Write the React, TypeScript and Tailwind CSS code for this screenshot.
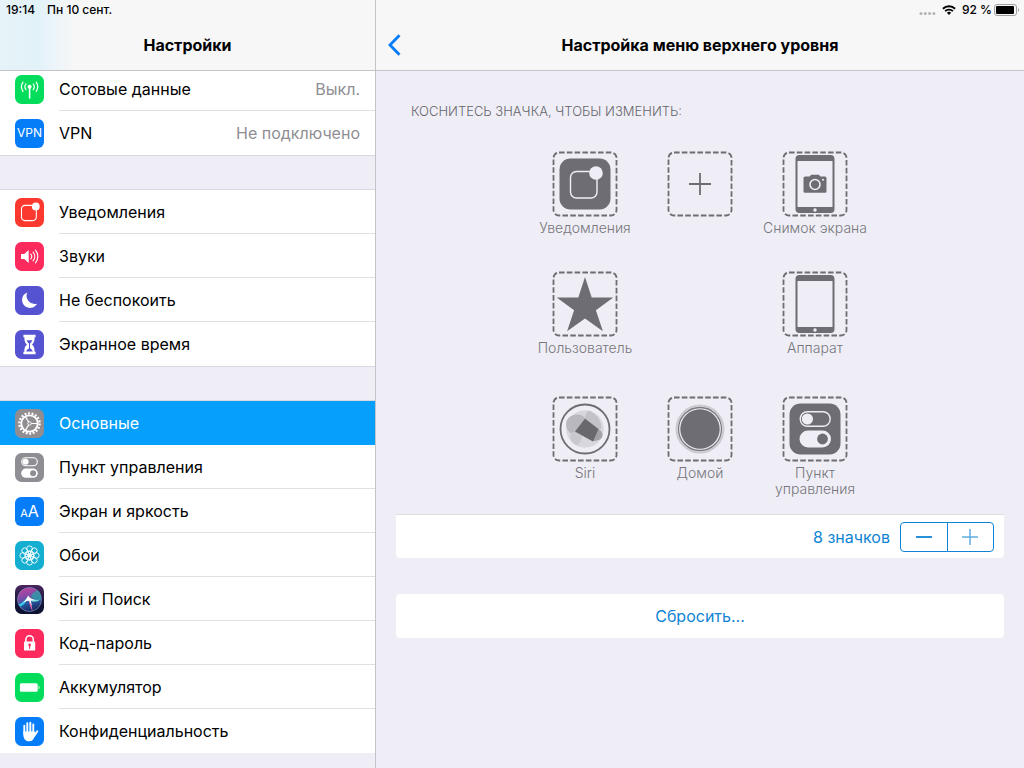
import React from 'react';

interface SettingsItem {
  label: string;
  value?: string;
  active?: boolean;
  icon: React.ReactNode;
}

interface MenuSlot {
  label: string;
  icon: React.ReactNode;
}

/**
 * Rounded square that holds a settings glyph
 */
const Tile = ({ color, children }: { color: string; children: React.ReactNode }) => (
  <svg className="size-[29px] shrink-0" viewBox="0 0 29 29" fill="none" aria-hidden="true">
    <rect width="29" height="29" rx="6.5" fill={color} />
    {children}
  </svg>
);

const TogglesGlyph = ({ back }: { back: string }) => (
  <>
    <rect x="6.7" y="4.8" width="15.6" height="8" rx="4" stroke="#fff" strokeWidth="1.1" />
    <circle cx="10.6" cy="8.8" r="3" fill="#fff" />
    <rect x="6.2" y="15.6" width="16.6" height="9.2" rx="4.6" fill="#fff" />
    <circle cx="18.1" cy="20.2" r="3" fill={back} />
  </>
);

const CellularIcon = () => (
  <Tile color="#04dd5c">
    <g stroke="#fff" strokeWidth="1.2" strokeLinecap="round">
      <path d="M14.6 12v11" strokeWidth="1.5" />
      <path d="M11 8.900a4.700 4.700 0 0 0 0 5.800M18.200 8.900a4.700 4.700 0 0 1 0 5.800" />
      <path d="M8 7.200a8.200 8.200 0 0 0 0 9.200M21.200 7.200a8.200 8.200 0 0 1 0 9.200" />
    </g>
    <circle cx="14.6" cy="11.800" r="2" fill="#fff" />
  </Tile>
);

const VpnIcon = () => (
  <span className="flex size-[29px] shrink-0 items-center justify-center rounded-md bg-[#067df8] text-xs text-white" aria-hidden="true">
    VPN
  </span>
);

const NotificationsIcon = () => (
  <Tile color="#fb392f">
    <path d="M17 7.400H9.800a3.300 3.300 0 0 0-3.300 3.300v8.600a3.300 3.300 0 0 0 3.300 3.300H18a3.300 3.300 0 0 0 3.300-3.300V12" stroke="#fff" strokeWidth="1.100" />
    <circle cx="20.800" cy="8.400" r="3.900" fill="#fff" />
  </Tile>
);

const SoundsIcon = () => (
  <Tile color="#fc2a5d">
    <path d="M6 11.9h3.300l4.400-3.900v13l-4.400-3.900H6z" fill="#fff" />
    <g stroke="#fff" strokeWidth="1.2" strokeLinecap="round">
      <path d="M15.800 12.200a3.600 3.600 0 0 1 0 4.600" />
      <path d="M18.100 10.200a6.600 6.600 0 0 1 0 8.600" />
      <path d="M20.500 8.200a9.800 9.800 0 0 1 0 12.600" />
    </g>
  </Tile>
);

const MoonIcon = () => (
  <Tile color="#5553d2">
    <path d="M12.300 6.400a8 8 0 1 0 9.800 11.300 8.300 8.300 0 0 1-9.800-11.300z" fill="#fff" />
  </Tile>
);

const HourglassIcon = () => (
  <Tile color="#5553d2">
    <path d="M8.400 4.800h12.200v2.400h-1c0 4.200-.8 5.600-2.600 7.300 1.800 1.700 2.600 3.100 2.600 7.300h1v2.400H8.400v-2.400h1c0-4.200.8-5.600 2.600-7.300-1.800-1.700-2.600-3.100-2.600-7.300h-1z" fill="#fff" />
    <path d="M11.700 10.300h5.600c-.4 1.600-1.500 2.600-2.300 3.200v5.100c1.200.3 2.200 1.200 2.800 3h-6.600c.6-1.800 1.600-2.700 2.800-3v-5.100c-.800-.6-1.900-1.600-2.300-3.200z" fill="#5553d2" />
  </Tile>
);

const GearIcon = () => (
  <Tile color="#918d90">
    <circle cx="14.500" cy="14.500" r="10.100" stroke="#fff" strokeWidth="2.400" strokeDasharray="1.900 1.625" />
    <circle cx="14.500" cy="14.500" r="8.200" stroke="#fff" strokeWidth="1.800" />
    <circle cx="14.500" cy="14.500" r="1.700" stroke="#fff" strokeWidth="1" />
    <path d="M16.200 14.500h6M13.600 13l-3.200-5.400M13.600 16l-3.200 5.400" stroke="#fff" strokeWidth="1.200" />
  </Tile>
);

const ControlCenterIcon = () => (
  <Tile color="#8f8e94">
    <TogglesGlyph back="#8f8e94" />
  </Tile>
);

const DisplayIcon = () => (
  <span className="flex size-[29px] shrink-0 items-baseline justify-center rounded-md bg-[#067df8] leading-7 text-white" aria-hidden="true">
    <span className="text-[11px]">A</span>
    <span className="text-base leading-7">A</span>
  </span>
);

const petals = [0, 45, 90, 135, 180, 225, 270, 315];

const WallpaperIcon = () => (
  <Tile color="#14aed0">
    <g stroke="#fff" strokeWidth="0.9">
      {petals.map((angle) => (
        <g key={angle} transform={`rotate(${angle} 14.5 14.5)`}>
          <circle cx="14.5" cy="7.700" r="2.800" />
          <ellipse cx="14.5" cy="11.900" rx="1.200" ry="2.400" />
        </g>
      ))}
    </g>
  </Tile>
);

const SiriIcon = () => (
  <svg className="size-[29px] shrink-0" viewBox="0 0 29 29" fill="none" aria-hidden="true">
    <defs>
      <linearGradient id="siri-back" x1="0" y1="0" x2="0" y2="1">
        <stop offset="0" stopColor="#4a2460" />
        <stop offset="0.5" stopColor="#1b1a3c" />
        <stop offset="1" stopColor="#0b1030" />
      </linearGradient>
      <linearGradient id="siri-orb" x1="0.3" y1="0" x2="0.6" y2="1">
        <stop offset="0" stopColor="#c2409f" />
        <stop offset="0.4" stopColor="#7a4da8" />
        <stop offset="0.6" stopColor="#2b5aa8" />
        <stop offset="1" stopColor="#142456" />
      </linearGradient>
    </defs>
    <rect width="29" height="29" rx="6.500" fill="url(#siri-back)" />
    <circle cx="14.500" cy="14.500" r="12" fill="url(#siri-orb)" stroke="#7f8fbc" strokeWidth="0.700" />
    <path d="M16 12c1-4 4-6 7.500-6.500 2 3 3 6 2.500 9-3.500.5-7 0-10-2.500z" fill="#2aa7a6" opacity="0.700" />
    <path d="M3.500 19.500c4-1.500 6.500-4 9-8-1 6-4 9-7.500 10z" fill="#36c8e9" />
    <path d="M13 12.500c4 2.300 8 2.800 12.500 2-4 2.800-8 2.800-11 .5z" fill="#6fdcd8" />
    <path d="M14.500 14c1.800 4 2.400 7.500 3 12-2.300-3.500-3.300-7.500-3.800-12z" fill="#ee62ad" />
    <path d="M5.500 18.800c4-1.800 6-4.300 7.700-8.300 1.300 2.700 4 4 7.800 4.500-2.500.7-4.300.5-5.300.2l1.300 6-3-5.500c-2.500 0-5 1.300-8.500 3.100z" fill="#fff" />
  </svg>
);

const LockIcon = () => (
  <Tile color="#fc2a5d">
    <path d="M10.900 13.500v-3a3.700 3.700 0 0 1 7.400 0v3" stroke="#fff" strokeWidth="1.500" />
    <rect x="9" y="12.600" width="11.200" height="9" rx="0.900" fill="#fff" />
    <circle cx="14.600" cy="15.900" r="1.300" fill="#fc2a5d" />
    <path d="M14.600 16v3.700" stroke="#fc2a5d" strokeWidth="1.100" />
  </Tile>
);

const BatteryTileIcon = () => (
  <Tile color="#04dd5c">
    <rect x="4.900" y="10.200" width="17.800" height="8.600" rx="1.500" fill="#fff" />
    <path d="M23.600 12.800c1.400.4 1.400 3 0 3.400z" fill="#fff" />
  </Tile>
);

const HandIcon = () => (
  <Tile color="#067df8">
    <g stroke="#fff" strokeWidth="1.900" strokeLinecap="round">
      <path d="M9.300 8.800v8M12.300 6.300v9M15.300 5.700v9M18.300 7.500v9" />
      <path d="M22.300 14.300l-3.300 5" />
    </g>
    <path d="M8.350 14.500h10.900l1.700 1.300-1.600 4.200c-.9 2.700-2.400 4.300-4.900 4.300-3.800 0-5.600-2-6.100-6z" fill="#fff" />
  </Tile>
);

const NotificationsSlotIcon = () => (
  <>
    <rect x="7.500" y="7.500" width="51" height="51" rx="11" fill="#6e6d73" />
    <rect x="18.500" y="20.500" width="26.500" height="26.500" rx="6" stroke="#efeef6" strokeWidth="1.400" />
    <circle cx="44" cy="22" r="6.800" fill="#efeef6" />
  </>
);

const PlusSlotIcon = () => <path d="M33 22v22M22 33h22" stroke="#6e6d73" strokeWidth="1.800" />;

const TabletShape = () => (
  <>
    <rect x="13.500" y="4" width="39" height="58" rx="4" fill="#6e6d73" />
    <rect x="15.500" y="10" width="35" height="46" fill="#efeef6" />
    <circle cx="33" cy="59" r="1.700" fill="#efeef6" />
  </>
);

const ScreenshotSlotIcon = () => (
  <>
    <TabletShape />
    <path d="M21.500 27a1.500 1.500 0 0 1 1.500-1.500h4.500l1.700-1.800h7.600l1.700 1.800H43a1.500 1.500 0 0 1 1.500 1.500v13.300a1.500 1.500 0 0 1-1.500 1.500H23a1.500 1.500 0 0 1-1.500-1.500z" fill="#6e6d73" />
    <circle cx="33" cy="33.500" r="5" stroke="#efeef6" strokeWidth="1.600" />
    <circle cx="41" cy="28.700" r="1" fill="#efeef6" />
  </>
);

const StarSlotIcon = () => (
  <path d="M33 6l6.700 20.500H61.300L43.900 39.200l7 21L33 47.400l-17.900 12.800 7-21L4.700 26.500h21.600z" fill="#6e6d73" />
);

const SiriSlotIcon = () => (
  <>
    <circle cx="33" cy="33" r="24.500" stroke="#6e6d73" strokeWidth="1.800" />
    <circle cx="33" cy="33" r="18.700" fill="#d8d7dd" />
    <path d="M14 28c0-7 8-11 15-9 2 1 3 2 4 3.500L23 35.500l-4 2c-3-2-5-5.500-5-9.500z" fill="#b9b8be" />
    <path d="M33 22c0-3 1.500-5.500 3.500-7.500 4 1.500 9 5 11 10 1.500 3 2 6 1.500 8.500h-3z" fill="#c3c2c8" />
    <path d="M23 35.500l17.500 9.500c3 0 6-.5 8-2 2.500-2 2.500-5 .5-8l-2.500-2-14-.5z" fill="#a3a2a8" />
    <path d="M23 35.500l7 4c0 4-2 8-5 10-4-2-6.500-5-7-8.500 0-2 2-4 5-5.500z" fill="#c9c8ce" />
    <path d="M33 22.500l13.500 10.500-5.500 12.500-18-10z" fill="#69686d" />
  </>
);

const HomeSlotIcon = () => (
  <>
    <circle cx="33" cy="33" r="24.500" fill="#cbcad1" />
    <circle cx="33" cy="33" r="22.400" fill="#efeef6" />
    <circle cx="33" cy="33" r="21.500" stroke="#7b7a80" strokeWidth="1.300" />
    <circle cx="33" cy="33" r="19.700" fill="#6e6d73" />
  </>
);

const ControlCenterSlotIcon = () => (
  <>
    <rect x="7.500" y="7.500" width="51" height="51" rx="11" fill="#6e6d73" />
    <rect x="18.200" y="15.700" width="30" height="14.600" rx="7.300" stroke="#efeef6" strokeWidth="1.400" />
    <circle cx="25.400" cy="23" r="5.600" fill="#efeef6" />
    <rect x="17.500" y="34.500" width="31.500" height="17" rx="8.500" fill="#efeef6" />
    <circle cx="40.500" cy="43" r="5.400" fill="#6e6d73" />
  </>
);

const groups: SettingsItem[][] = [
  [
    { label: 'Сотовые данные', value: 'Выкл.', icon: <CellularIcon /> },
    { label: 'VPN', value: 'Не подключено', icon: <VpnIcon /> },
  ],
  [
    { label: 'Уведомления', icon: <NotificationsIcon /> },
    { label: 'Звуки', icon: <SoundsIcon /> },
    { label: 'Не беспокоить', icon: <MoonIcon /> },
    { label: 'Экранное время', icon: <HourglassIcon /> },
  ],
  [
    { label: 'Основные', active: true, icon: <GearIcon /> },
    { label: 'Пункт управления', icon: <ControlCenterIcon /> },
    { label: 'Экран и яркость', icon: <DisplayIcon /> },
    { label: 'Обои', icon: <WallpaperIcon /> },
    { label: 'Siri и Поиск', icon: <SiriIcon /> },
    { label: 'Код-пароль', icon: <LockIcon /> },
    { label: 'Аккумулятор', icon: <BatteryTileIcon /> },
    { label: 'Конфиденциальность', icon: <HandIcon /> },
  ],
];

// null leaves a cell of the 3x3 menu empty
const slots: (MenuSlot | null)[] = [
  { label: 'Уведомления', icon: <NotificationsSlotIcon /> },
  { label: '', icon: <PlusSlotIcon /> },
  { label: 'Снимок экрана', icon: <ScreenshotSlotIcon /> },
  { label: 'Пользователь', icon: <StarSlotIcon /> },
  null,
  { label: 'Аппарат', icon: <TabletShape /> },
  { label: 'Siri', icon: <SiriSlotIcon /> },
  { label: 'Домой', icon: <HomeSlotIcon /> },
  { label: 'Пункт управления', icon: <ControlCenterSlotIcon /> },
];

const SettingsRow = ({ item, last }: { item: SettingsItem; last: boolean }) => (
  <li>
    <a
      href="#"
      aria-current={item.active ? 'page' : undefined}
      className={`flex h-11 items-center gap-[15px] pl-[15px] ${item.active ? 'bg-[#069ffc] text-white' : 'text-black'}`}
    >
      {item.icon}
      <span
        className={`flex h-full flex-1 items-center justify-between border-b pr-[15px] ${
          last || item.active ? 'border-transparent' : 'border-[#e0dfe3]'
        }`}
      >
        <span>{item.label}</span>
        {item.value && <span className="text-[#8e8e93]">{item.value}</span>}
      </span>
    </a>
  </li>
);

const Sidebar = () => (
  <aside className="flex w-[376px] shrink-0 flex-col border-r border-[#c4c3c8]">
    <header className="flex h-[71px] flex-col border-b border-[#c4c3c8] bg-[#f7f7f8] bg-linear-to-r from-[#e6f3f8] via-[#e2f2f9] via-10% to-[#f7f7f8] to-20%">
      <div className="flex h-5 items-center gap-3 pl-[6px] text-xs font-medium">
        <span>19:14</span>
        <span>Пн 10 сент.</span>
      </div>
      <h1 className="flex flex-1 items-center justify-center font-bold">Настройки</h1>
    </header>
    <nav className="flex-1 overflow-hidden" aria-label="Настройки">
      <div className="-mt-1">
        {groups.map((group, i) => (
          <React.Fragment key={i}>
            <ul className="bg-white">
              {group.map((item, j) => (
                <SettingsRow key={item.label} item={item} last={j === group.length - 1} />
              ))}
            </ul>
            {i < groups.length - 1 && <div className="h-[35px] border-y border-[#d9d8de]" />}
          </React.Fragment>
        ))}
      </div>
    </nav>
  </aside>
);

const StatusIcons = () => (
  <div className="flex h-5 items-center justify-end gap-[6px] pr-1 text-xs font-medium">
    <svg className="h-3 w-[17px]" viewBox="0 0 17 12" fill="#b4b4b6" aria-hidden="true">
      <circle cx="2" cy="9.500" r="1.500" />
      <circle cx="6.300" cy="9.500" r="1.500" />
      <circle cx="10.600" cy="9.500" r="1.500" />
      <circle cx="14.900" cy="9.500" r="1.500" />
    </svg>
    <svg className="h-[10px] w-[14px]" viewBox="0 0 14 10" fill="none" stroke="#000" strokeWidth="1.900" aria-hidden="true">
      <path d="M0.900 3.800a8.700 8.700 0 0 1 12.200 0" />
      <path d="M3.100 6.200a5.500 5.500 0 0 1 7.800 0" />
      <path d="M7 9.900L4.900 7.700a3 3 0 0 1 4.200 0z" fill="#000" stroke="none" />
    </svg>
    <span>92 %</span>
    <svg className="-ml-1 h-3 w-[26px]" viewBox="0 0 26 12" fill="none" aria-hidden="true">
      <rect x="0.500" y="0.500" width="22" height="11" rx="2.500" stroke="#a0a0a2" />
      <rect x="2" y="2" width="18" height="8" rx="1" fill="#000" />
      <path d="M24 4.200c1.500.5 1.500 3.100 0 3.600z" fill="#a0a0a2" />
    </svg>
  </div>
);

const SlotButton = ({ slot }: { slot: MenuSlot }) => (
  <button type="button" aria-label={slot.label || 'Добавить'} className="flex flex-col items-center self-start text-sm leading-4 font-light text-[#77767c]">
    <svg className="size-[66px]" viewBox="0 0 66 66" fill="none" aria-hidden="true">
      <rect x="1.500" y="1.500" width="63" height="63" rx="5.500" stroke="#6e6d73" strokeWidth="1.800" strokeDasharray="5.600 2.200" />
      {slot.icon}
    </svg>
    {slot.label && <span className="mt-[3px]">{slot.label}</span>}
  </button>
);

export default function App() {
  return (
    <div className="flex min-h-screen bg-[#efeef6] font-[Inter,'Liberation_Sans',sans-serif] text-base text-black">
      <Sidebar />
      <div className="flex flex-1 flex-col">
        <header className="flex h-[71px] flex-col border-b border-[#c4c3c8] bg-[#f7f7f8]">
          <StatusIcons />
          <div className="grid flex-1 grid-cols-[40px_1fr_40px] items-center">
            <button type="button" aria-label="Назад" className="pl-3">
              <svg className="h-[22px] w-[13px]" viewBox="0 0 13 22" fill="none" stroke="#067df8" strokeWidth="2.800" aria-hidden="true">
                <path d="M11.500 1.200L2 11l9.500 9.800" />
              </svg>
            </button>
            <h2 className="text-center font-bold">Настройка меню верхнего уровня</h2>
          </div>
        </header>

        <main className="flex flex-col px-5 pt-8">
          <p className="pl-[15px] text-[13px] leading-4 font-light text-[#66656b]">КОСНИТЕСЬ ЗНАЧКА, ЧТОБЫ ИЗМЕНИТЬ:</p>

          <div className="mx-auto mt-8 grid grid-cols-[repeat(3,115px)] grid-rows-[120px_125px_118px]">
            {slots.map((slot, i) => (slot ? <SlotButton key={i} slot={slot} /> : <span key={i} />))}
          </div>

          <div className="flex h-11 items-center justify-end gap-[10px] rounded-b-sm border-t border-[#dcdbe0] bg-white pr-[10px] text-[#0f84d4]">
            <span>8 значков</span>
            <div className="flex h-[30px] w-[94px] divide-x divide-[#0f84d4] rounded-sm border border-[#0f84d4]">
              <button type="button" aria-label="Уменьшить" className="flex flex-1 items-center justify-center">
                <svg className="size-4" viewBox="0 0 16 16" stroke="#0f84d4" strokeWidth="1.800" aria-hidden="true">
                  <path d="M0 8h16" />
                </svg>
              </button>
              <button type="button" aria-label="Увеличить" className="flex flex-1 items-center justify-center">
                <svg className="size-4" viewBox="0 0 16 16" stroke="#5fade0" strokeWidth="1.500" aria-hidden="true">
                  <path d="M0 8h16M8 0v16" />
                </svg>
              </button>
            </div>
          </div>

          <button type="button" className="mt-9 h-11 rounded-sm bg-white text-[#0f84d4]">
            Сбросить...
          </button>
        </main>
      </div>
    </div>
  );
}
